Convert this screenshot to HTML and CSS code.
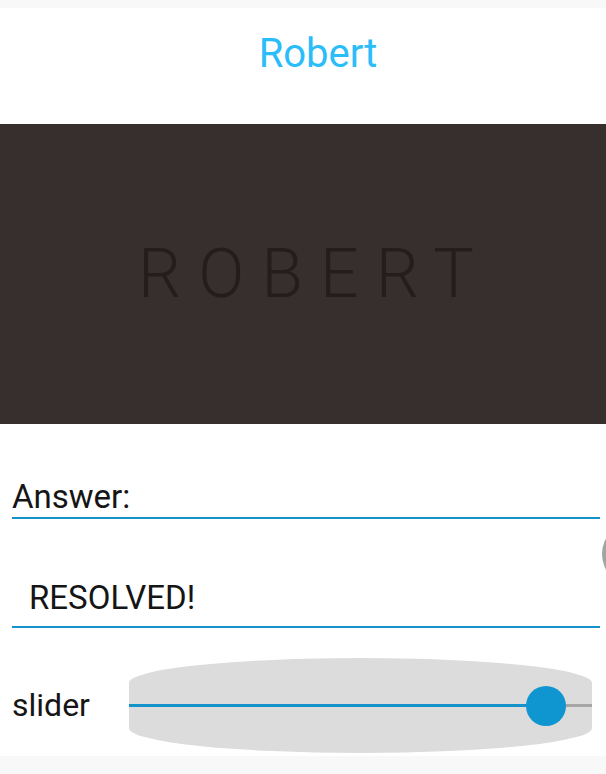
FILE: index.html
```html
<!DOCTYPE html>
<html lang="en">
<head>
<meta charset="utf-8">
<title>Robert</title>
<link rel="stylesheet" href="styles.css">
</head>
<body>
<div class="screen">
  <header class="appbar">
    <h1 class="appbar-title">Robert</h1>
  </header>
  <section class="banner">
    <span class="banner-text">ROBERT</span>
  </section>
  <section class="form">
    <div class="field field-label">Answer:</div>
    <div class="field field-value">RESOLVED!</div>
    <div class="slider-row">
      <span class="slider-label">slider</span>
      <div class="slider">
        <div class="track">
          <div class="track-fill"></div>
          <div class="track-rest"></div>
        </div>
        <div class="thumb"></div>
      </div>
    </div>
    <div class="edge-knob"></div>
  </section>
</div>
</body>
</html>
```

FILE: styles.css
```css
html, body {
  margin: 0;
  padding: 0;
}
body {
  background: #f8f8f8;
  width: 606px;
  height: 774px;
  overflow: hidden;
  font-family: Roboto, "Liberation Sans", Arial, sans-serif;
}
.screen {
  margin-top: 8px;
  background: #ffffff;
  height: 748px;
  display: flex;
  flex-direction: column;
  overflow: hidden;
}
.appbar {
  height: 116px;
  box-sizing: border-box;
  padding-top: 26px;
  padding-left: 30px;
  text-align: center;
}
.appbar-title {
  margin: 0;
  font-weight: 400;
  font-size: 40px;
  line-height: 40px;
  color: #2abdf9;
}
.banner {
  height: 300px;
  background: #372f2e;
  display: flex;
  align-items: center;
  justify-content: center;
}
.banner-text {
  font-size: 68px;
  font-weight: 300;
  line-height: 68px;
  letter-spacing: 17px;
  padding-left: 23px;
  color: #231d1c;
}
.form {
  position: relative;
  flex: 1;
  display: flex;
  flex-direction: column;
}
.field {
  margin-left: 12px;
  margin-right: 6px;
  border-bottom: 2px solid #1493cb;
  font-size: 33px;
  line-height: 37px;
  color: #151515;
}
.field-label {
  margin-top: 54px;
  padding-bottom: 2px;
}
.field-value {
  margin-top: 60px;
  padding-left: 17px;
  padding-bottom: 10px;
}
.slider-row {
  margin-top: 30px;
  display: flex;
  align-items: center;
  padding-left: 12px;
}
.slider-label {
  width: 117px;
  font-size: 32px;
  line-height: 37px;
  color: #151515;
}
.slider {
  position: relative;
  width: 463px;
  height: 95px;
  background: #dcdcdc;
  border-radius: 50% / 25px;
  display: flex;
  align-items: center;
}
.track {
  width: 100%;
  height: 3px;
  display: flex;
}
.track-fill {
  width: 417px;
  background: #1493cb;
}
.track-rest {
  flex: 1;
  background: #a6a6a6;
}
.thumb {
  position: absolute;
  left: 397px;
  top: 28px;
  width: 40px;
  height: 40px;
  border-radius: 50%;
  background: #0f95cf;
}
.edge-knob {
  position: absolute;
  left: 602px;
  top: 98px;
  width: 64px;
  height: 64px;
  border-radius: 50%;
  background: #a3a3a3;
}
```
